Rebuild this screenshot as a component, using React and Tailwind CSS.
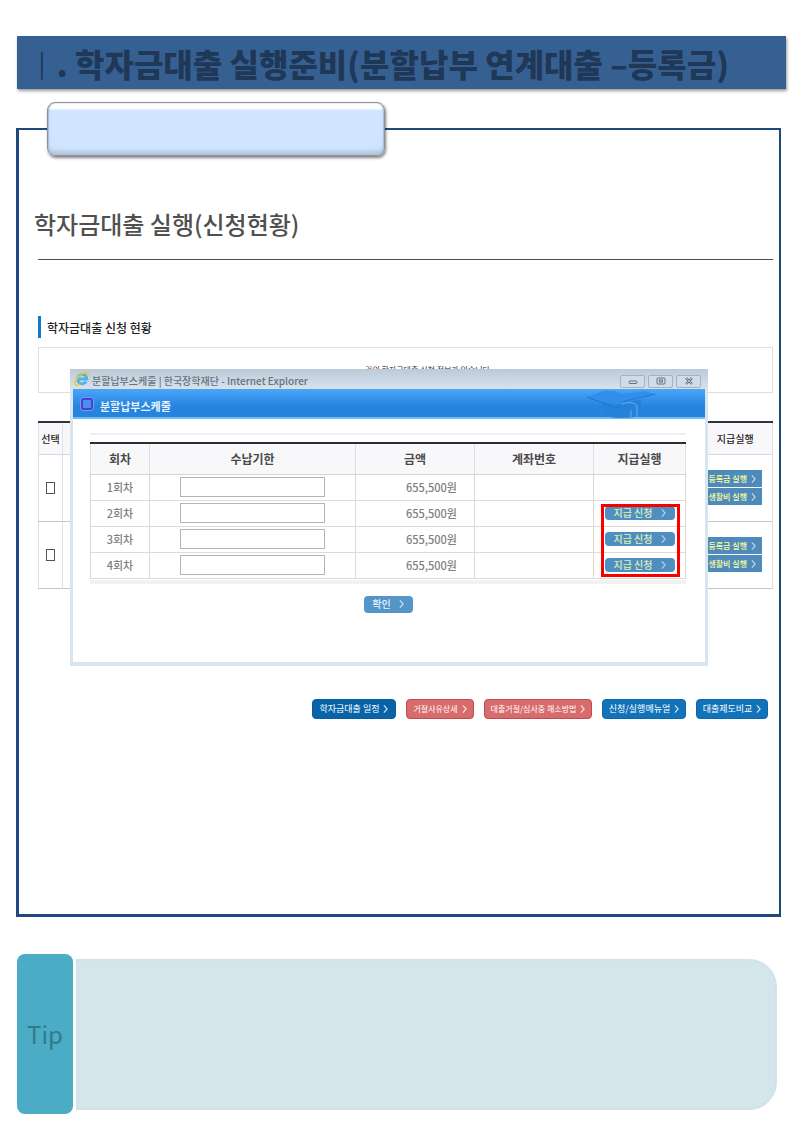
import React, { useState } from 'react';

const INSTALLMENTS = [
  { no: '1회차', amount: '655,500원', canPay: false },
  { no: '2회차', amount: '655,500원', canPay: true },
  { no: '3회차', amount: '655,500원', canPay: true },
  { no: '4회차', amount: '655,500원', canPay: true },
];

const LINKS = [
  { label: '학자금대출 일정',        cls: 'w-21 text-[9px] bg-[#0864a8] border-[#0a5c9c]' },
  { label: '거절사유상세',           cls: 'w-17 text-[8px] bg-[#d86b6c] border-[#c04a4e]' },
  { label: '대출거절/심사중 해소방법', cls: 'w-27 text-[8px] bg-[#d86b6c] border-[#c04a4e]' },
  { label: '신청/실행메뉴얼',        cls: 'w-21 text-[9px] bg-[#1272ba] border-[#0c66aa]' },
  { label: '대출제도비교',           cls: 'w-18 text-[9px] bg-[#1272ba] border-[#0c66aa]' },
];

function Chevron() {
  return (
    <svg viewBox="0 0 6 10" className="w-[5px] h-2 shrink-0 opacity-80" fill="none" stroke="currentColor" strokeWidth="1.5" aria-hidden="true">
      <path d="M1 .5 L5 5 L1 9.5" />
    </svg>
  );
}

function BrowserIcon() {
  return (
    <svg viewBox="0 0 16 16" className="w-4 h-4 shrink-0" fill="none" aria-hidden="true">
      <path d="M12.2 10.6 A4.7 4.7 0 1 1 12.9 8 H5" stroke="#4fb4e4" strokeWidth="2.8" />
      <path d="M1.6 14.2 C-.6 11 5 3.2 10.6 1.6 C14 .8 14.8 2.6 13.6 5" stroke="#e9c63c" strokeWidth="1.5" />
      <path d="M1.6 14.2 C3 15 5 13.8 6.4 12.8" stroke="#e9c63c" strokeWidth="1.3" />
    </svg>
  );
}

function GradCap() {
  return (
    <svg viewBox="0 0 70 28" className="w-[70px] h-7 mr-12" aria-hidden="true">
      <path d="M0 7 L16 1 H28 L34 4 L58 1 L68 4 L54 10 L34 14 Z" fill="#318fe9" />
      <path d="M16 12 L30 19 L38 12 L54 10 V26 Q34 30 16 26 Z" fill="#2582d8" />
      <path d="M0 7 L30 18 L38 11 L68 4" fill="none" stroke="#1f7bd0" strokeWidth="1.2" />
      <path d="M34 14 Q46 10 50 16 V27 M44 27 V20" fill="none" stroke="#4aa3f0" strokeWidth="1.5" />
    </svg>
  );
}

function WindowButton({ label, children }) {
  return (
    <button type="button" aria-label={label}
      className="flex items-center justify-center w-[25px] h-[13px] rounded-xs border border-[#a3b2c2] bg-[#d0dce7] text-[#66717c]">
      <svg viewBox="0 0 10 8" className="w-2.5 h-2" fill="none" stroke="currentColor" aria-hidden="true">{children}</svg>
    </button>
  );
}

function StatusRow({ id }) {
  return (
    <tr className="h-[67px] border-b border-[#c4c4c4]">
      <td className="border-r border-[#dedee2] p-0">
        <input type="checkbox" aria-label={`신청 ${id} 선택`}
          className="appearance-none block mx-auto w-[9px] h-3 border border-[#555] bg-white" />
      </td>
      <td />
      <td className="border-r border-[#dedee2] p-0">
        <div className="flex flex-col items-end gap-px pr-2.5">
          {['등록금 실행', '생활비 실행'].map(t => (
            <button key={t} type="button"
              className="flex items-center justify-end gap-1 w-16 h-[17px] pr-1.5 bg-[#4e8bbb] text-[#ffff9a] text-[8px] font-medium whitespace-nowrap">
              {t} <span className="text-[#dce8f2]"><Chevron /></span>
            </button>
          ))}
        </div>
      </td>
    </tr>
  );
}

function ScheduleDialog() {
  const [dates, setDates] = useState({});

  return (
    <div role="dialog" aria-label="분할납부스케줄"
      className="absolute left-8 right-[65px] top-[22px] h-[297px] border-b-4 border-[#d8e4f0] bg-white">
      <div className="flex items-center h-5 pl-1 pr-[7px] bg-linear-to-b from-[#bccad8] to-[#d6e2ee]">
        <BrowserIcon />
        <p className="flex-1 pl-0.5 pt-1 text-[10px] leading-4 font-medium text-[#66717b]">분할납부스케줄 | 한국장학재단 - Internet Explorer</p>
        <div className="flex gap-[3px] pt-1">
          <WindowButton label="최소화"><rect x="1" y="4" width="8" height="2.5" rx="1" /></WindowButton>
          <WindowButton label="최대화"><rect x="1" y="1" width="8" height="6" rx="1" /><rect x="3.5" y="3" width="3" height="2" /></WindowButton>
          <WindowButton label="닫기"><path d="M2 1 L8 7 M8 1 L2 7" strokeWidth="2.4" /><path d="M2 1 L8 7 M8 1 L2 7" stroke="#d0dce7" strokeWidth=".7" /></WindowButton>
        </div>
      </div>

      <div className="h-[273px] border-x-3 border-[#d8e4f0]">
        <div className="flex items-center h-[30px] pl-2 border-t border-b-2 border-t-[#5c9fdc] border-b-[#6fbdf8] bg-linear-to-b from-[#46a4fc] to-[#2684de] to-60%">
          <span className="w-3 h-3 rounded-xs border-2 border-[#4a3fd2] bg-[#4a90ea] outline outline-[#6d9df0]" />
          <h4 className="flex-1 pl-[7px] pt-1 text-[11px] leading-4 font-bold text-[#e8f4ff]">분할납부스케줄</h4>
          <GradCap />
        </div>

        <div className="pl-[17px] pr-[19px] pt-[14px]">
          <div className="h-0.5 mb-[7px] bg-[#f0f0f0]" />
          <table className="w-full table-fixed border-collapse text-[11px] font-medium text-[#808080]">
            <colgroup>
              <col className="w-[59px]" />
              <col />
              <col className="w-[119px]" />
              <col className="w-[119px]" />
              <col className="w-[92px]" />
            </colgroup>
            <thead>
              <tr className="h-[31px] border-t-2 border-[#2c2c36] bg-[#f8f8fa] text-[12px] text-[#4a4a4a]">
                {['회차', '수납기한', '금액', '계좌번호', '지급실행'].map(h => (
                  <th key={h} className="border-x border-b border-b-[#d4d4d4] border-x-[#dedede] p-0 font-bold">{h}</th>
                ))}
              </tr>
            </thead>
            <tbody>
              {INSTALLMENTS.map(r => (
                <tr key={r.no} className="h-[26px]">
                  <td className="border border-[#dadada] p-0 text-center">{r.no}</td>
                  <td className="border border-[#dadada] p-0">
                    <input type="text" aria-label={`${r.no} 수납기한`} value={dates[r.no] || ''}
                      onChange={e => setDates({ ...dates, [r.no]: e.target.value })}
                      className="block w-[145px] h-5 mx-auto px-1 border border-[#b4b4b4] bg-white" />
                  </td>
                  <td className="border border-[#dadada] p-0 pr-[17px] text-right">{r.amount}</td>
                  <td className="border border-[#dadada] p-0" />
                  <td className="border border-[#dadada] p-0">
                    {r.canPay && (
                      <button type="button"
                        className="flex items-center justify-center gap-2 w-[70px] h-[14px] mx-auto rounded-sm bg-[#4e8fc2] text-[#e0f0b0] text-[10px] font-medium leading-none">
                        지급 신청 <span className="text-[#d0e2f0]"><Chevron /></span>
                      </button>
                    )}
                  </td>
                </tr>
              ))}
            </tbody>
          </table>
          <div className="h-1 mt-px bg-[#f2f2f2]" />
          <button type="button"
            className="flex items-center justify-center gap-2 w-[49px] h-[17px] mt-3 mx-auto rounded-sm bg-[#5496c8] text-[#e8f2fa] text-[10px] font-medium leading-none">
            확인 <Chevron />
          </button>
        </div>
      </div>
      {/* highlight around the pay buttons */}
      <div className="absolute right-7 top-[135px] w-[79px] h-[73px] border-3 border-[#f80000] pointer-events-none" />
    </div>
  );
}

export default function App() {
  return (
    <div className="min-h-screen bg-white pt-9 pb-[21px] px-4 font-['Noto_Sans_CJK_KR','Noto_Sans',sans-serif]">
      <header className="flex items-center h-[53px] ml-px pl-2.5 bg-[#376092] shadow-[1px_2px_3px_rgba(0,0,0,0.4)]">
        <h1 className="flex items-center whitespace-pre text-[32px] leading-none font-black text-[#1f3857]">
          <span className="font-light">ㅣ</span>. 학자금대출 실행준비(분할납부 연계대출 –등록금)
        </h1>
      </header>

      <main className="relative mt-[39px] mr-[5px] h-[789px] border-2 border-l-3 border-b-3 border-[#1f497d] pl-[19px] pr-1.5 pt-[76px]">
        <div className="absolute left-7 -top-7 w-[338px] h-[54px] rounded-lg border border-[#8a93a2] bg-linear-to-b from-white from-10% via-[#d0e5ff] via-15% to-[#d0e5ff] shadow-[inset_0_-5px_4px_-1px_#b4c3dc,inset_1px_0_1px_#a8b8d0,inset_-1px_0_1px_#a8b8d0,1px_2px_3px_rgba(0,0,0,0.5)]" />

        <h2 className="-ml-1 pb-[17px] text-[24px] leading-9 font-medium text-[#505050]">학자금대출 실행(신청현황)</h2>
        <hr className="border-[#4c4860]" />

        <h3 className="mt-14 h-[22px] border-l-3 border-[#1278c8] pl-1.5 pt-0.5 text-[12px] leading-5 font-medium text-[#222]">학자금대출 신청 현황</h3>

        <section className="relative mt-[9px]">
          <p className="h-[46px] border border-[#dedede] pl-11 pt-3 text-center text-[8px] leading-5 text-[#333]">
            <span className="text-[#b8441c]">건</span>의 학자금대출 신청 정보가 있습니다
          </p>
          <table className="mt-7 w-full table-fixed border-collapse border-l border-l-[#dedee2]">
            <thead>
              <tr className="h-8 border-t-2 border-t-[#30343e] border-b border-b-[#d8d4ee] bg-[#f8f8fb] text-[10px] text-[#222]">
                <th className="w-6 border-r border-r-[#e0e0f0] p-0 font-medium whitespace-nowrap">선택</th>
                <th />
                <th className="w-[74px] border-r border-r-[#e0e0f0] p-0 font-medium">지급실행</th>
              </tr>
            </thead>
            <tbody>
              <StatusRow id={1} />
              <StatusRow id={2} />
            </tbody>
          </table>
          <ScheduleDialog />
        </section>

        <nav className="flex justify-end gap-2.5 mt-[110px] pr-[5px]">
          {LINKS.map(l => (
            <a key={l.label} href="#"
              className={`flex items-center justify-center gap-1 h-5 rounded-sm border text-white whitespace-nowrap ${l.cls}`}>
              {l.label} <Chevron />
            </a>
          ))}
        </nav>
      </main>

      <aside className="flex items-center gap-[3px] mt-[37px] ml-px mr-[9px]">
        <div className="flex items-center justify-center w-14 h-40 rounded-lg bg-[#4bacc6]">
          <strong className="text-[24px] leading-none font-normal text-[#357889]">Tip</strong>
        </div>
        <div className="flex-1 h-[151px] rounded-r-[28px] border-2 border-[#d0e3ea] bg-[#d4e5eb]" />
      </aside>
    </div>
  );
}
